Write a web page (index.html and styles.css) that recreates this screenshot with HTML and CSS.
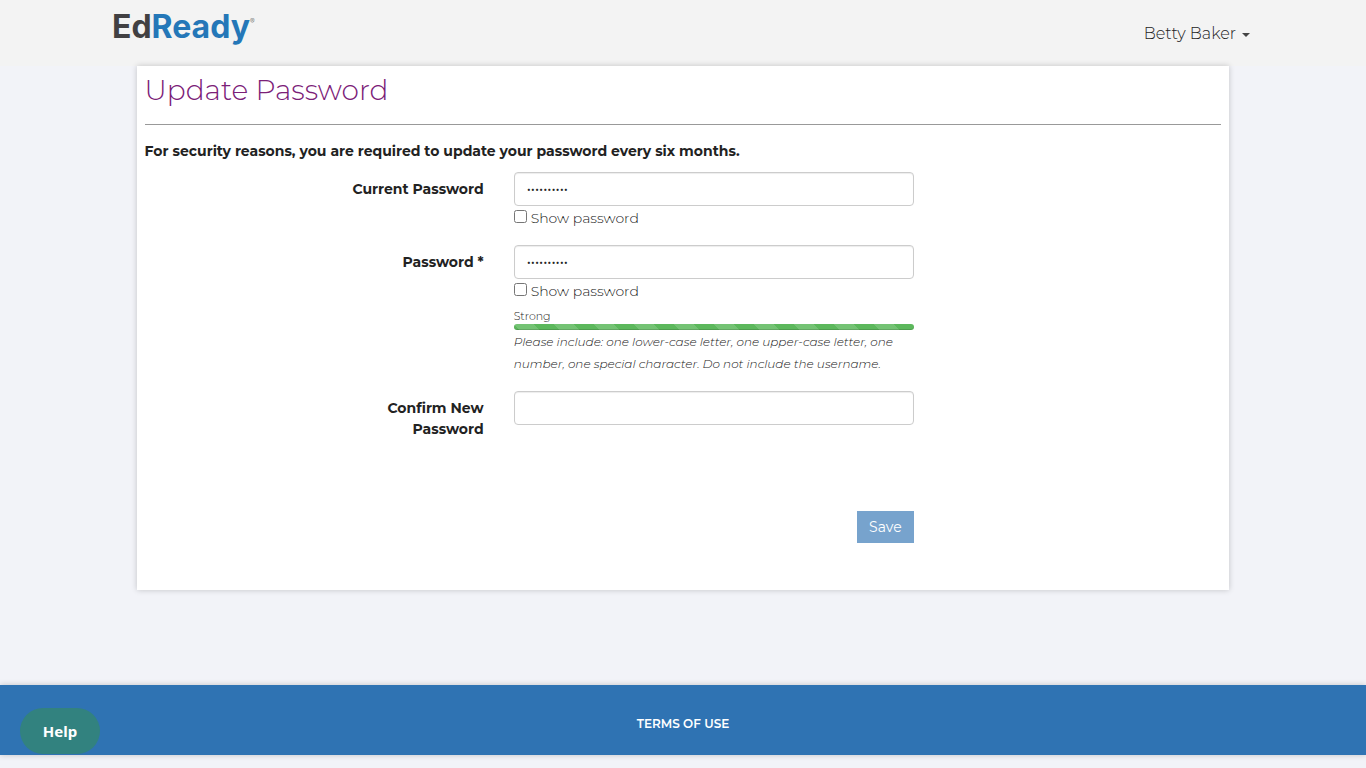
FILE: index.html
```html
<!DOCTYPE html>
<html lang="en">
<head>
    <meta charset="UTF-8">
    <meta name="viewport" content="width=device-width, initial-scale=1.0">
    <title>EdReady - Update Password</title>
    <link rel="stylesheet" href="styles.css">
</head>
<body>
    <header class="navbar">
        <a class="logo" href="#"><span class="logo-ed">Ed</span><span class="logo-ready">Ready</span><span class="logo-mark">®</span></a>
        <button type="button" class="user-menu">Betty Baker <span class="caret"></span></button>
    </header>

    <main class="panel">
        <h1>Update Password</h1>
        <p class="notice">For security reasons, you are required to update your password every six months.</p>

        <form>
            <div class="form-group">
                <label class="control-label" for="currentPassword">Current Password</label>
                <div class="field">
                    <input type="password" class="form-control" id="currentPassword" value="Passw0rd!1">
                    <label class="show-password"><input type="checkbox"> Show password</label>
                </div>
            </div>

            <div class="form-group">
                <label class="control-label" for="password">Password *</label>
                <div class="field">
                    <input type="password" class="form-control" id="password" value="Passw0rd!2">
                    <label class="show-password"><input type="checkbox"> Show password</label>
                    <div class="strength">Strong</div>
                    <div class="progress"></div>
                    <p class="help-text">Please include: one lower-case letter, one upper-case letter, one number, one special character. Do not include the username.</p>
                </div>
            </div>

            <div class="form-group">
                <label class="control-label" for="confirmPassword">Confirm New Password</label>
                <div class="field">
                    <input type="password" class="form-control" id="confirmPassword">
                </div>
            </div>

            <div class="form-group actions">
                <div class="field">
                    <button type="submit" class="btn-save" disabled>Save</button>
                </div>
            </div>
        </form>
    </main>

    <footer class="footer">
        <a href="#">TERMS OF USE</a>
    </footer>

    <button type="button" class="help-button">Help</button>
</body>
</html>
```
FILE: styles.css
```css
* {
    box-sizing: border-box;
}

body {
    margin: 0;
    font-family: Montserrat, Inter, sans-serif;
    font-size: 14px;
    font-weight: 300;
    line-height: 21px;
    color: #222;
    background-color: #f2f3f8;
}

button, input {
    font-family: inherit;
}

.navbar {
    display: flex;
    justify-content: space-between;
    height: 66px;
    padding: 8px 116px 0 112px;
    background-color: #f3f3f3;
}

.logo {
    display: flex;
    font-family: Inter, sans-serif;
    font-size: 32px;
    font-weight: 700;
    line-height: 38px;
    text-decoration: none;
}

.logo-ed {
    color: #414042;
}

.logo-ready {
    color: #2477b8;
}

.logo-mark {
    font-size: 7px;
    font-weight: 400;
    line-height: 27px;
    color: #888;
}

.user-menu {
    display: flex;
    align-items: center;
    gap: 6px;
    height: 50px;
    padding: 0;
    border: none;
    background: none;
    font-size: 16px;
    font-weight: 300;
    color: #222;
    cursor: pointer;
}

.caret {
    margin-top: 4px;
    border-top: 4px solid #444;
    border-right: 4px solid transparent;
    border-left: 4px solid transparent;
}

.panel {
    width: 80%;
    margin: 0 auto 95px;
    padding: 8px 8px 47px;
    background-color: #fff;
    box-shadow: 0 0 6px rgba(0, 0, 0, 0.2);
}

h1 {
    margin: 0 0 16px;
    padding-bottom: 17px;
    border-bottom: 1px solid #999;
    font-size: 28px;
    font-weight: 300;
    line-height: 33px;
    color: #7b2077;
}

.notice {
    margin: 0 0 10px;
    font-weight: 700;
}

.form-group {
    display: flex;
    gap: 30px;
    margin-bottom: 16px;
    padding-left: 17%;
}

.control-label {
    width: 156px;
    padding-top: 7px;
    font-weight: 700;
    text-align: right;
}

.field {
    flex: 1;
    max-width: 400px;
}

.form-control {
    display: block;
    width: 100%;
    height: 34px;
    padding: 6px 12px;
    border: 1px solid #ccc;
    border-radius: 4px;
    box-shadow: inset 0 1px 1px rgba(0, 0, 0, 0.075);
    font-size: 14px;
    color: #222;
}

.show-password {
    display: flex;
    align-items: center;
    gap: 4px;
    padding-top: 2px;
}

.show-password input {
    width: 13px;
    height: 13px;
    margin: 0 0 4px;
}

.strength {
    margin-top: 6px;
    font-size: 11px;
    line-height: 16px;
}

.progress {
    height: 6px;
    border-radius: 4px;
    background-color: #5cb85c;
    background-image: linear-gradient(45deg, rgba(255, 255, 255, 0.15) 25%, transparent 25%, transparent 50%, rgba(255, 255, 255, 0.15) 50%, rgba(255, 255, 255, 0.15) 75%, transparent 75%, transparent);
    background-size: 40px 40px;
    box-shadow: inset 0 -1px 0 rgba(0, 0, 0, 0.15);
}

.help-text {
    margin: 1px 0 0;
    font-size: 12px;
    font-style: italic;
    line-height: 22px;
}

.actions {
    justify-content: flex-start;
    margin: 71px 0 0;
    padding-left: calc(17% + 186px);
}

.actions .field {
    display: flex;
    justify-content: flex-end;
}

.btn-save {
    height: 32px;
    padding: 0 12px;
    border: none;
    background-color: #2f73b3;
    font-size: 14px;
    font-weight: 400;
    color: #fff;
    opacity: 0.65;
}

.footer {
    display: flex;
    align-items: center;
    justify-content: center;
    height: 70px;
    margin-bottom: 13px;
    padding-top: 6px;
    background-color: #2f73b3;
    box-shadow: 0 0 6px rgba(0, 0, 0, 0.2);
}

.footer a {
    font-size: 12px;
    font-weight: 600;
    color: #fff;
    text-decoration: none;
}

.help-button {
    position: fixed;
    bottom: 14px;
    left: 20px;
    width: 80px;
    height: 46px;
    border: none;
    border-radius: 23px;
    background-color: #32827f;
    font-family: "Noto Sans", sans-serif;
    font-size: 15px;
    font-weight: 700;
    color: #fff;
    cursor: pointer;
}
```
